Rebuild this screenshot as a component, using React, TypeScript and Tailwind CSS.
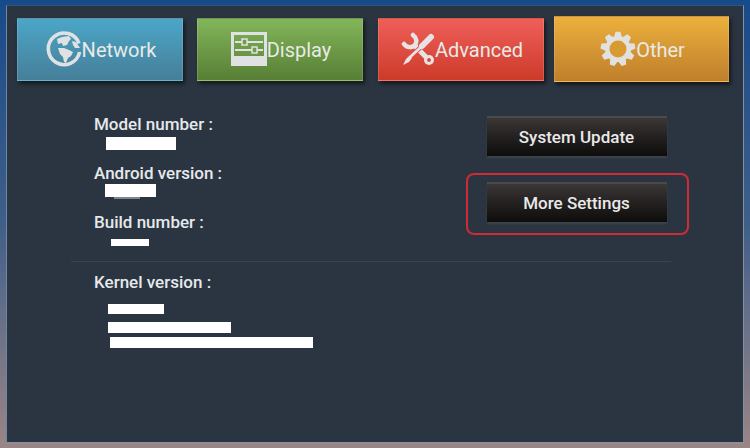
import React from "react";

const gearPath = (() => {
  const teeth = 9;
  const cx = 18;
  const cy = 18;
  const pts: string[] = [];
  for (let i = 0; i < teeth; i++) {
    const a = (i / teeth) * Math.PI * 2 - Math.PI / 2;
    const step = (Math.PI * 2) / teeth;
    const corners: [number, number][] = [
      [13, -0.42],
      [17.5, -0.2],
      [17.5, 0.2],
      [13, 0.42],
    ];
    corners.forEach(([r, k]) => {
      const t = a + k * step;
      pts.push(`${(cx + r * Math.cos(t)).toFixed(2)} ${(cy + r * Math.sin(t)).toFixed(2)}`);
    });
  }
  return `M${pts.join("L")}Z`;
})();

function GlobeIcon() {
  return (
    <svg width="36" height="36" viewBox="0 0 36 36" className="shrink-0">
      <path
        d="M33 12.5 A15.8 15.8 0 1 0 33.6 21"
        fill="none"
        stroke="#dfe1e2"
        strokeWidth="3.6"
      />
      <path d="M11 8 L16 6 L23 5 L25 8 L23 10 L21 14 L17 15 L16 12 L12 13 Z" fill="#dfe1e2" />
      <path d="M12 17 L18 17 L23 19 L27 21 L25 25 L22 27 L20 32 L18 31 L17 26 L14 23 Z" fill="#dfe1e2" />
      <path d="M26 10 L30 11 L34 17 L29 17 L27 14 Z" fill="#dfe1e2" />
    </svg>
  );
}

function SlidersIcon() {
  return (
    <svg width="36" height="34" viewBox="0 0 36 34" className="shrink-0">
      <path d="M0 0H36V34H0Z M3 3V24H33V3Z" fill="#dfe1e2" fillRule="evenodd" />
      <rect x="4" y="9" width="28" height="2" fill="#dfe1e2" />
      <rect x="4" y="17" width="28" height="2" fill="#dfe1e2" />
      <rect x="11" y="7" width="5" height="6" fill="#6f9c4a" stroke="#dfe1e2" strokeWidth="1.5" />
      <rect x="21" y="15" width="5" height="6" fill="#6f9c4a" stroke="#dfe1e2" strokeWidth="1.5" />
    </svg>
  );
}

function ToolsIcon() {
  return (
    <svg width="34" height="34" viewBox="0 0 34 34" className="shrink-0">
      <path
        d="M12 3 C16 6 16 10 14 13 C11 16 6 16 3 12"
        fill="none"
        stroke="#e6e3e2"
        strokeWidth="4.5"
        strokeLinecap="round"
      />
      <path d="M13 13 L27 27" stroke="#e6e3e2" strokeWidth="5" />
      <circle cx="28" cy="28" r="5" fill="#e6e3e2" />
      <circle cx="28" cy="28" r="1.9" fill="#d9473a" />
      <path d="M31 4 L20 15 L7 27" fill="none" stroke="#e0504a" strokeWidth="4.5" />
      <path d="M30 5 L21 14" stroke="#e6e3e2" strokeWidth="6" strokeLinecap="round" />
      <path d="M21 14 L7 27" stroke="#e6e3e2" strokeWidth="2.6" />
      <path d="M9 24 L5 27 L2 33 L8 30 L11 26 Z" fill="#e6e3e2" />
    </svg>
  );
}

function GearIcon() {
  return (
    <svg width="36" height="36" viewBox="0 0 36 36" className="shrink-0">
      <path d={gearPath} fill="#e3e1df" />
      <circle cx="18" cy="18" r="8.5" fill="#d89a33" />
    </svg>
  );
}

const tabs = [
  { label: "Network", icon: <GlobeIcon />, cls: "w-[166px] h-[63px] bg-gradient-to-b from-[#4ba6c8] to-[#457f99] ml-[10px]" },
  { label: "Display", icon: <SlidersIcon />, cls: "w-[166px] h-[63px] bg-gradient-to-b from-[#83b65a] to-[#577f35] ml-[14px]" },
  { label: "Advanced", icon: <ToolsIcon />, cls: "w-[166px] h-[63px] bg-gradient-to-b from-[#ef5f59] to-[#cc3a28] ml-[15px]" },
  { label: "Other", icon: <GearIcon />, cls: "w-[175px] h-[66px] bg-gradient-to-b from-[#ecb03c] to-[#bf7f2c] ml-[10px]" },
];

function RedactBar({ className }: { className: string }) {
  return <div className={`bg-white ${className}`} />;
}

export default function App() {
  return (
    <div className="h-[448px] w-[750px] overflow-hidden bg-gradient-to-b from-[#174a8a] via-[#3f5f88] to-[#9a8585] px-[6px] pb-[4px] pt-[5px] font-['Roboto',sans-serif]">
      <div className="h-full border border-b-[2px] border-[#315478] border-b-[#8c8f96] border-r-[#7f93a8] border-l-[#6f88a5] bg-[#2b3541]">
        <div className="flex items-center pt-[10px]">
          {tabs.map((tab) => (
            <div
              key={tab.label}
              className={`flex items-center justify-center pl-[2px] text-[20px] text-[#e8eae6] shadow-[2px_3px_4px_rgba(0,0,0,0.55)] border border-white/15 ${tab.cls}`}
            >
              {tab.icon}
              <span className="pt-[2px]">{tab.label}</span>
            </div>
          ))}
        </div>

        <div className="mt-[33px] flex">
          <div className="ml-[87px] w-[358px]">
            <p className="text-[17px] font-medium leading-[19px] text-[#e6e9ec]">Model number :</p>
            <RedactBar className="ml-[12px] mt-[3px] h-[13px] w-[70px]" />
            <p className="mt-[14px] text-[17px] font-medium leading-[19px] text-[#e6e9ec]">Android version :</p>
            <RedactBar className="ml-[11px] mt-[1px] h-[13px] w-[51px]" />
            <div className="ml-[20px] h-[2px] w-[26px] bg-white/40" />
            <p className="mt-[14px] text-[17px] font-medium leading-[19px] text-[#e6e9ec]">Build number :</p>
            <RedactBar className="ml-[17px] mt-[7px] h-[7px] w-[38px]" />
          </div>
          <div className="ml-[13px] flex w-[223px] flex-col items-center pt-[1px]">
            <div className="flex h-[40px] w-[180px] items-center justify-center border-t-2 border-[#4a4a4a] bg-gradient-to-b from-[#3a3736] to-[#0f0c0c] pt-[1px] text-[17px] font-medium text-[#e9e9e9] shadow-[0_2px_2px_rgba(70,75,80,0.7)]">
              System Update
            </div>
            <div className="ml-[2px] mt-[17px] flex h-[62px] w-[223px] items-start justify-center rounded-[8px] border-2 border-[#cf2a36] pr-[2px] pt-[7px]">
              <div className="flex h-[40px] w-[180px] items-center justify-center border-t-2 border-[#4a4a4a] bg-gradient-to-b from-[#3a3736] to-[#0f0c0c] pt-[1px] text-[17px] font-medium text-[#e9e9e9] shadow-[0_2px_2px_rgba(70,75,80,0.7)]">
                More Settings
              </div>
            </div>
          </div>
        </div>

        <div className="ml-[64px] mt-[15px] h-[1px] w-[600px] bg-[#3a4450]" />

        <div className="ml-[87px] mt-[11px]">
          <p className="text-[17px] font-medium leading-[19px] text-[#e6e9ec]">Kernel version :</p>
          <RedactBar className="ml-[14px] mt-[12px] h-[10px] w-[56px]" />
          <RedactBar className="ml-[14px] mt-[8px] h-[11px] w-[123px]" />
          <RedactBar className="ml-[16px] mt-[4px] h-[11px] w-[203px]" />
        </div>
      </div>
    </div>
  );
}
